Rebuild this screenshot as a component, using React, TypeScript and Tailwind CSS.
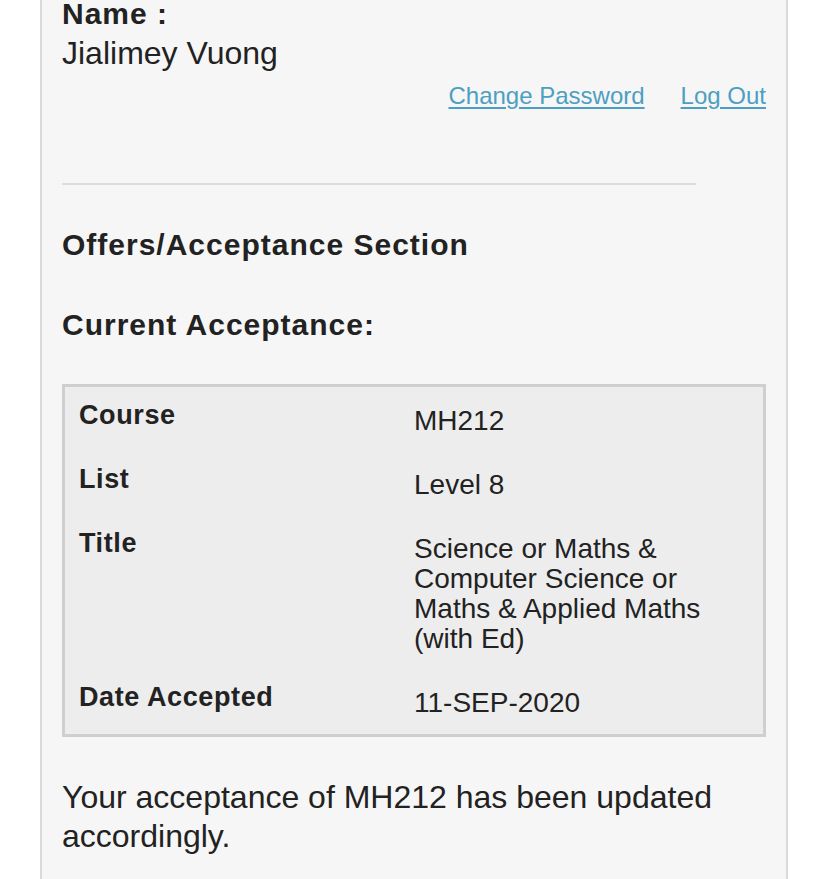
import React from "react";

const rows: { label: string; value: string }[] = [
  { label: "Course", value: "MH212" },
  { label: "List", value: "Level 8" },
  { label: "Title", value: "Science or Maths & Computer Science or Maths & Applied Maths (with Ed)" },
  { label: "Date Accepted", value: "11-SEP-2020" },
];

export default function App() {
  return (
    <div
      className="min-h-[879px] w-[828px] bg-white text-[#222222]"
      style={{ fontFamily: '"Liberation Sans", Arial, sans-serif' }}
    >
      <div className="ml-[40px] w-[748px] min-h-[879px] border-x-2 border-[#dadada] bg-[#f6f6f6] px-[20px] pb-10">
        <div className="text-[30px] font-bold leading-[28px] tracking-[1px]">Name :</div>
        <div className="mt-[7px] text-[32px] leading-[36px]">Jialimey Vuong</div>
        <div className="mt-[11px] flex justify-end gap-[36px] text-[24px] leading-[27px] text-[#4d9fc1]">
          <a href="#" className="underline underline-offset-[3px]">Change Password</a>
          <a href="#" className="underline underline-offset-[3px]">Log Out</a>
        </div>
        <div className="mt-[74px] h-[2px] w-[90%] bg-[#dcdcdc]" />
        <div className="mt-[43px] text-[30px] font-bold leading-[34px] tracking-[1px]">
          Offers/Acceptance Section
        </div>
        <div className="mt-[46px] text-[30px] font-bold leading-[34px] tracking-[1px]">
          Current Acceptance:
        </div>
        <div className="mt-[42px] border-[3px] border-[#cfcfcf] bg-[#ededed] pb-[1px]">
          {rows.map((r) => (
            <div key={r.label} className="flex items-start">
              <div className="w-[349px] shrink-0 pl-[14px] pt-[13px] text-[27px] font-bold leading-[30px] tracking-[0.6px]">
                {r.label}
              </div>
              <div className="flex-1 pr-[14px] pt-[19px] pb-[15px] text-[28px] leading-[30px]">
                {r.value}
              </div>
            </div>
          ))}
        </div>
        <p className="mt-[41px] text-[32px] leading-[39px]">
          Your acceptance of MH212 has been updated accordingly.
        </p>
      </div>
    </div>
  );
}
